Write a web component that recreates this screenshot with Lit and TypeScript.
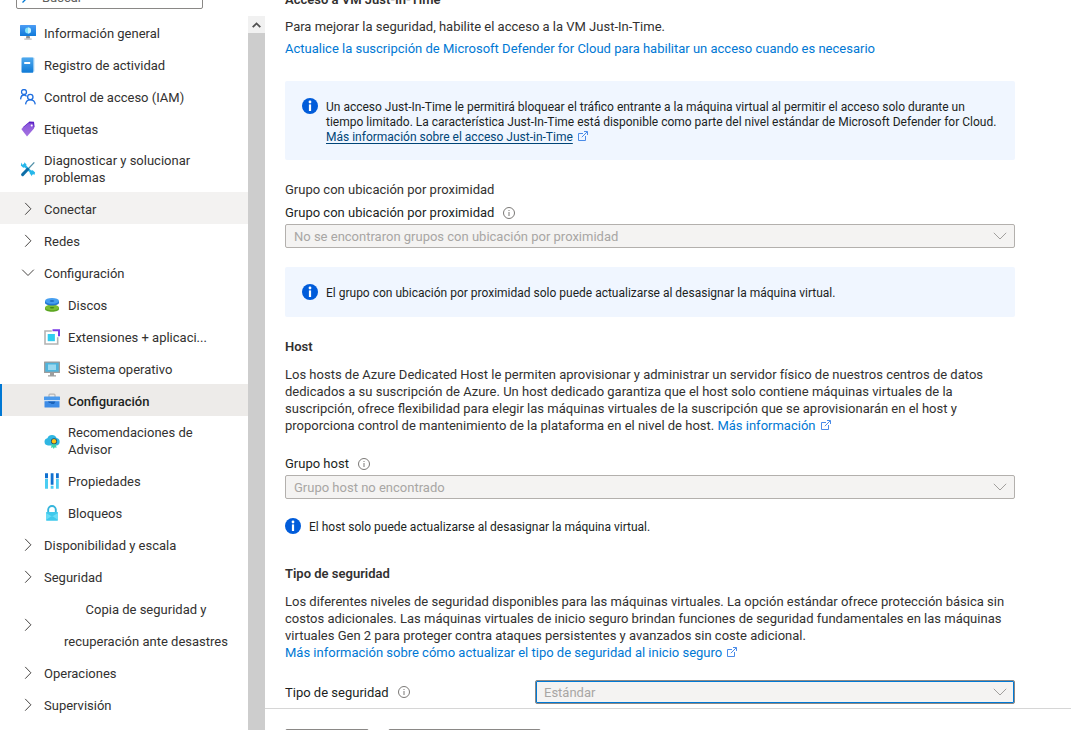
import { LitElement, html, css, svg, nothing } from "lit";
import type { TemplateResult } from "lit";
import { customElement } from "lit/decorators.js";
import { classMap } from "lit/directives/class-map.js";

const icon = (body: unknown) =>
  html`<svg class="icon" viewBox="0 0 16 16" aria-hidden="true">${body}</svg>`;

const icons: Record<string, TemplateResult> = {
  overview: icon(svg`
    <defs>
      <linearGradient id="ov" x1="0" y1="1" x2="0" y2="0"><stop offset="0" stop-color="#0f7ad9"/><stop offset="1" stop-color="#4b9cf5"/></linearGradient>
    </defs>
    <rect x="0" y="0" width="16" height="11" rx=".5" fill="url(#ov)"/>
    <circle cx="8" cy="5.500" r="3" fill="#7fe3fb"/>
    <path d="M8 2.500a3 3 0 0 1 0 6Z" fill="#c5f4ff"/>
    <path d="M6.300 11h3.400l.4 2.500H6Z" fill="#8f8f8f"/>
    <path d="M4.300 13.500h7.400v1.200H4.300Z" fill="#b9b9b9"/>`),
  log: icon(svg`
    <defs>
      <linearGradient id="lg" x1="0" y1="1" x2="0" y2="0"><stop offset="0" stop-color="#0f7ad6"/><stop offset="1" stop-color="#4fa9ee"/></linearGradient>
    </defs>
    <path d="M3 .5h10.500a1 1 0 0 1 1 1v13H3Z" fill="#b9ddf7"/>
    <path d="M1.500 1.500a1 1 0 0 1 1-1h10a.8.8 0 0 1 .8.800V15a.8.8 0 0 1-.8.800h-10a1 1 0 0 1-1-1Z" fill="url(#lg)"/>
    <rect x="4.200" y="5" width="6" height="2" rx=".5" fill="#fff"/>`),
  iam: icon(svg`
    <g fill="none" stroke="#1f6fe0" stroke-width="1.300">
      <circle cx="4" cy="3" r="2.500"/>
      <path d="M.6 10.400C.8 7.500 2.200 6 4 6c1.200 0 2 .5 2.600 1.300"/>
      <circle cx="10.300" cy="8" r="2.700"/>
      <path d="M5.600 15.400c.2-2.900 2.100-4.600 4.700-4.600 2.700 0 4.700 1.800 4.900 4.600"/>
    </g>`),
  tags: icon(svg`
    <defs>
      <linearGradient id="tg" x1="0" y1="0" x2="0" y2="1"><stop offset="0" stop-color="#8a56dc"/><stop offset="1" stop-color="#a573e0"/></linearGradient>
    </defs>
    <path d="M9.500.5 14 .8l.6 5.200-3 3L2.500 6.500Z" fill="#5b1fc4"/>
    <path d="M1.300 8 8.500 2.300 13 2.500l1 5L7 15.400Z" fill="url(#tg)"/>
    <circle cx="11.700" cy="4.500" r="1" fill="#fff"/>`),
  diagnose: icon(svg`
    <path d="M3.300 3.300 12.800 12.900" stroke="#26b7ea" stroke-width="2.300"/>
    <path d="M1.600 1.500.8 4.500l2.400 2.200 2.700-.6.6-2.500L4.300 1.300 4 3.700l-1.400.400ZM9.700 12.300l.5-2.500 2.600-.6 2.300 2.300-.7 2.600-.9-.9-1.500.5.100 1.700Z" fill="#26b7ea"/>
    <path d="M14.300 1.400 7.600 8.500" stroke="#4f8fa8" stroke-width="1.300"/>
    <path d="M7.700 8.300 2.600 13.600" stroke="#0d6ea8" stroke-width="3" stroke-linecap="round"/>`),
  disks: icon(svg`
    <path d="M1 10.300v1.700C1 13.700 4 14.700 8 14.700s7-1 7-2.700v-1.700Z" fill="#5aa51f"/>
    <ellipse cx="8" cy="10.400" rx="7" ry="2.800" fill="#7cbd34"/>
    <ellipse cx="8" cy="10.800" rx="2.300" ry=".7" fill="#3f8613"/>
    <path d="M1 4v1.700c0 1.700 3 2.700 7 2.700s7-1 7-2.700V4Z" fill="#2276d2"/>
    <ellipse cx="8" cy="3.900" rx="7" ry="2.900" fill="#479ff0"/>
    <ellipse cx="8" cy="4" rx="2.300" ry=".8" fill="#1461b8"/>`),
  extensions: icon(svg`
    <path d="M7.800 2H1v13h12.700V8.300" fill="#fff" stroke="#b3b3b3" stroke-width="1.600"/>
    <rect x="3.700" y="5" width="7.200" height="7.200" fill="#32cdf0"/>
    <path d="M8.500 1.200H15v6" fill="none" stroke="#7a3be8" stroke-width="2"/>`),
  os: icon(svg`
    <rect x="0" y=".5" width="16" height="11.500" rx=".5" fill="#9d9d9d"/>
    <rect x="1.300" y="1.800" width="13.400" height="8.900" fill="#4fb4dc"/>
    <rect x="4" y="3.500" width="8" height="5.500" fill="#9bd9f0"/>
    <path d="M6 12h4v2.200h2V15.500H4v-1.300h2Z" fill="#9d9d9d"/>`),
  toolbox: icon(svg`
    <path d="M5 4V2.100c0-.5.4-.9.9-.9h4.200c.5 0 .9.400.9.900V4" fill="none" stroke="#b5b5b5" stroke-width="1.200"/>
    <rect x="0" y="3.500" width="16" height="4" rx=".5" fill="#4b9aec"/>
    <rect x=".5" y="8" width="15" height="6.500" rx=".5" fill="#3c8be6"/>
    <path d="M0 7.200h16v1H0Z" fill="#d3e7fb"/>
    <path d="M4 8.500h7.500L10 11H7.500l-1-1H5Z" fill="#1a62b8"/>`),
  advisor: icon(svg`
    <path d="M4 12.500a3.700 3.700 0 0 1-.6-7.300A5 5 0 0 1 12.600 5a3.800 3.800 0 0 1-.4 7.500Z" fill="#2fb6e2"/>
    <path d="m8 10-1 5 1.700-.8L9.800 16l1-1.800 1.700.8L11.800 10Z" fill="#3fd3b0"/>
    <circle cx="10" cy="8.300" r="3" fill="#254d64"/>
    <circle cx="10" cy="8.300" r="2.200" fill="#ffc414"/>`),
  properties: icon(svg`
    <g fill="#0f70d0"><path d="M1 .3h3v5H1ZM6.700.3h2.800v11.500H6.700ZM12 .3h2.800v5H12Z"/></g>
    <g fill="#4bcdf2"><path d="M1 6h3v9.800H1ZM6.700 12.800h2.800v3H6.700ZM12 6h2.800v9.800H12Z"/></g>`),
  lock: icon(svg`
    <path d="M4.200 8V4.800a3.800 3.800 0 0 1 7.600 0V8" fill="none" stroke="#35b5dc" stroke-width="1.900"/>
    <rect x="2" y="7" width="12" height="8.800" rx=".8" fill="#3fc9ec"/>
    <path d="m2 15 6-4.200 6 4.200V8L8 11.500 2 8Z" fill="#6adcf6"/>`),
};

const chevron = (open: boolean) => html`<svg class="icon" viewBox="0 0 16 16" aria-hidden="true">
  <path d=${open ? "M2.200 4.700 8 10.500l5.800-5.800" : "M5.200 1.900 10.900 7.800 5.200 13.700"} fill="none" stroke="#484644" stroke-width="1"/>
</svg>`;

const infoBadge = html`<svg class="badge" viewBox="0 0 16 16" aria-hidden="true">
  <circle cx="8" cy="8" r="8" fill="#015cda"/>
  <circle cx="8" cy="4" r="1.400" fill="#fff"/>
  <path d="M6.900 6.400h2.200v6.600H6.900Z" fill="#fff"/>
</svg>`;

const hint = html`<svg class="hint" viewBox="0 0 12 12" aria-hidden="true">
  <circle cx="6" cy="6" r="5.500" fill="none" stroke="#7a7876"/>
  <path d="M5.500 3h1v1h-1ZM5.500 5h1v4h-1Z" fill="#7a7876"/>
</svg>`;

const external = html`<svg class="external" viewBox="0 0 10 10" aria-hidden="true">
  <path d="M5 2.500H.5v7h7V5M3.800 6.200 9.300.7M6 .5h3.500V4" fill="none" stroke="#4a8be8" stroke-width="1"/>
</svg>`;

interface NavItem {
  label: string;
  icon?: string;
  sub?: boolean;
  open?: boolean;
  hover?: boolean;
  active?: boolean;
  centered?: boolean;
}

const navItems: NavItem[] = [
  { label: "Información general", icon: "overview" },
  { label: "Registro de actividad", icon: "log" },
  { label: "Control de acceso (IAM)", icon: "iam" },
  { label: "Etiquetas", icon: "tags" },
  { label: "Diagnosticar y solucionar problemas", icon: "diagnose" },
  { label: "Conectar", hover: true },
  { label: "Redes" },
  { label: "Configuración", open: true },
  { label: "Discos", icon: "disks", sub: true },
  { label: "Extensiones + aplicaci...", icon: "extensions", sub: true },
  { label: "Sistema operativo", icon: "os", sub: true },
  { label: "Configuración", icon: "toolbox", sub: true, active: true },
  { label: "Recomendaciones de Advisor", icon: "advisor", sub: true },
  { label: "Propiedades", icon: "properties", sub: true },
  { label: "Bloqueos", icon: "lock", sub: true },
  { label: "Disponibilidad y escala" },
  { label: "Seguridad" },
  { label: "Copia de seguridad y recuperación ante desastres", centered: true },
  { label: "Operaciones" },
  { label: "Supervisión" },
];

@customElement("side-menu")
export class SideMenu extends LitElement {
  static styles = css`
    :host {
      display: flex;
      flex-direction: column;
      width: 265px;
      flex: none;
      min-height: 0;
      overflow: hidden;
      color: #323130;
    }
    .top {
      display: flex;
      align-items: flex-end;
      height: 9px;
      padding: 0 10px 7px 16px;
      overflow: hidden;
      flex: none;
    }
    .search {
      display: flex;
      align-items: center;
      gap: 8px;
      box-sizing: border-box;
      width: 187px;
      height: 24px;
      padding: 0 5px;
      border: 1px solid #8a8886;
      border-radius: 2px;
    }
    .search input {
      flex: 1;
      min-width: 0;
      padding: 0;
      border: 0;
      outline: 0;
      background: none;
      font: inherit;
    }
    .search input::placeholder {
      color: #605e5c;
      opacity: 1;
    }
    .glass {
      width: 12px;
      height: 12px;
    }
    .tools {
      display: flex;
      flex: 1;
      justify-content: flex-end;
      gap: 20px;
      padding: 0 0 6px;
    }
    .tools button {
      padding: 0;
      border: 0;
      background: none;
      font: inherit;
      line-height: 16px;
      color: #605e5c;
    }
    .body {
      display: flex;
      flex: 1;
      min-height: 0;
    }
    .list {
      flex: 1;
      min-width: 0;
      overflow: hidden;
    }
    .item {
      display: flex;
      align-items: center;
      gap: 8px;
      box-sizing: border-box;
      min-height: 32px;
      padding: 1px 16px 0 20px;
      color: inherit;
      text-decoration: none;
      line-height: 17px;
    }
    .label {
      flex: 1;
      padding-top: 1px;
    }
    .icon {
      width: 16px;
      height: 16px;
      flex: none;
    }
    .sub {
      padding-left: 44px;
    }
    .tall {
      min-height: 48px;
    }
    .hover {
      background: #f3f2f1;
    }
    .active {
      background: #edebe9;
      box-shadow: inset 2px 0 #0078d4;
      font-weight: 500;
      color: #201f1e;
    }
    .centered {
      height: 64px;
      padding-right: 0;
      text-align: center;
      line-height: 32px;
    }
    .centered .label {
      padding: 2px 16px 0;
    }
    .scroll {
      width: 17px;
      flex: none;
      background: #cdcdcd;
    }
    .up {
      display: flex;
      align-items: center;
      justify-content: center;
      width: 17px;
      height: 17px;
      padding: 0;
      border: 0;
      background: #f1f1f1;
    }
    .arrow {
      width: 9px;
      height: 6px;
    }
  `;

  render() {
    return html`
      <div class="top">
        <label class="search">
          <svg class="glass" viewBox="0 0 12 12" aria-hidden="true">
            <path d="M.5 11.500 4.500 7.500" stroke="#0078d4" stroke-width="1.300"/>
            <circle cx="7.500" cy="4.500" r="3.800" fill="none" stroke="#0078d4"/>
          </svg>
          <input type="search" placeholder="Buscar" aria-label="Buscar" />
        </label>
        <div class="tools">
          <button type="button" aria-label="Ordenar">⬨</button>
          <button type="button" aria-label="Contraer menú">«</button>
        </div>
      </div>
      <div class="body">
        <nav class="list">
          ${navItems.map(
            (item) => html`<a
              href="#"
              class=${classMap({
                item: true,
                sub: !!item.sub,
                hover: !!item.hover,
                active: !!item.active,
                centered: !!item.centered,
                tall: item.icon === "diagnose" || item.icon === "advisor",
              })}
              aria-current=${item.active ? "page" : nothing}
              >${item.icon ? icons[item.icon] : chevron(!!item.open)}<span class="label">${item.label}</span></a
            >`
          )}
        </nav>
        <div class="scroll">
          <button class="up" type="button" aria-label="Subir">
            <svg class="arrow" viewBox="0 0 9 6" aria-hidden="true">
              <path d="M.7 5.200 4.500 1.400l3.800 3.800" fill="none" stroke="#505050" stroke-width="1.800"/>
            </svg>
          </button>
        </div>
      </div>
    `;
  }
}

@customElement("settings-page")
export class SettingsPage extends LitElement {
  static styles = css`
    :host {
      display: flex;
      flex-direction: column;
      flex: 1;
      min-width: 0;
      overflow: hidden;
      color: #323130;
    }
    .content {
      flex: 1;
      min-height: 0;
      overflow: hidden;
      padding: 0 56px 0 20px;
      line-height: 17px;
    }
    h2,
    h3,
    p {
      margin: 0;
      font-size: 13px;
    }
    h2 {
      font-weight: 600;
    }
    h3 {
      font-weight: 400;
    }
    a {
      color: #0078d4;
      text-decoration: none;
    }
    .clipped {
      margin-top: -9px;
    }
    .lead {
      margin: 10px 0 5px;
    }
    .note {
      display: flex;
      gap: 8px;
      padding: 17px 16px 16px 17px;
      border-radius: 2px;
      background: #f0f6ff;
      font-size: 12px;
      line-height: 15px;
      color: #201f1e;
    }
    .note p {
      padding-top: 2px;
      font-size: 12px;
    }
    .note a {
      color: #004578;
      text-decoration: underline;
      text-underline-offset: 2px;
    }
    .first {
      margin: 24px 0 21px;
      padding-bottom: 15px;
    }
    .second {
      margin: 19px 0 21px;
    }
    .plain {
      padding: 0;
      margin: 19px 0 30px;
      background: none;
    }
    .badge {
      width: 16px;
      height: 16px;
      flex: none;
    }
    .hint {
      width: 12px;
      height: 12px;
      flex: none;
    }
    .external {
      width: 10px;
      height: 10px;
      margin-left: 5px;
    }
    .caption {
      display: flex;
      align-items: center;
      gap: 9px;
      margin: 6px 0 3px;
      color: #201f1e;
    }
    .text {
      margin: 11px 0 0;
    }
    .text + .caption {
      margin-top: 21px;
    }
    .picker {
      display: grid;
      align-items: center;
    }
    .picker select,
    .arrow {
      grid-area: 1 / 1;
    }
    select {
      appearance: none;
      box-sizing: border-box;
      width: 100%;
      height: 24px;
      padding: 1px 32px 0 8px;
      border: 1px solid #b3b0ad;
      border-radius: 2px;
      background: #f4f3f2;
      color: #a8a6a4;
      opacity: 1;
      font: inherit;
    }
    .arrow {
      justify-self: end;
      width: 14px;
      height: 8px;
      margin-right: 8px;
      pointer-events: none;
    }
    .row {
      display: grid;
      grid-template-columns: 250px 1fr;
      align-items: center;
      margin-top: 19px;
    }
    .row .caption {
      margin: 0;
    }
    .row select {
      border-color: #8a8886;
      box-shadow: inset 0 0 0 1px #0078d4;
    }
    .footer {
      display: flex;
      gap: 19px;
      height: 1px;
      padding: 20px 20px 0;
      border-top: 1px solid #d6d6d6;
      overflow: hidden;
    }
    .footer button {
      box-sizing: border-box;
      height: 24px;
      flex: none;
      border: 1px solid #8a8886;
      border-radius: 2px;
      background: #fff;
    }
    .apply {
      width: 84px;
    }
    .discard {
      width: 153px;
    }
  `;

  private picker(id: string, value: string) {
    return html`<div class="picker">
      <select id=${id} disabled>
        <option>${value}</option>
      </select>
      <svg class="arrow" viewBox="0 0 14 8" aria-hidden="true">
        <path d="M.8.8 7 7 13.200.8" fill="none" stroke="#a19f9d" stroke-width="1"/>
      </svg>
    </div>`;
  }

  render() {
    return html`
      <div class="content">
        <h2 class="clipped">Acceso a VM Just-In-Time</h2>
        <p class="lead">Para mejorar la seguridad, habilite el acceso a la VM Just-In-Time.</p>
        <a href="#">Actualice la suscripción de Microsoft Defender for Cloud para habilitar un acceso cuando es necesario</a>

        <div class="note first">
          ${infoBadge}
          <p>
            Un acceso Just-In-Time le permitirá bloquear el tráfico entrante a la máquina virtual al permitir el acceso
            solo durante un tiempo limitado. La característica Just-In-Time está disponible como parte del nivel
            estándar de Microsoft Defender for Cloud.<br /><a href="#">Más información sobre el acceso Just-in-Time</a
            >${external}
          </p>
        </div>

        <h3>Grupo con ubicación por proximidad</h3>
        <label class="caption" for="proximity">Grupo con ubicación por proximidad ${hint}</label>
        ${this.picker("proximity", "No se encontraron grupos con ubicación por proximidad")}

        <div class="note second">
          ${infoBadge}
          <p>El grupo con ubicación por proximidad solo puede actualizarse al desasignar la máquina virtual.</p>
        </div>

        <h2>Host</h2>
        <p class="text">
          Los hosts de Azure Dedicated Host le permiten aprovisionar y administrar un servidor físico de nuestros
          centros de datos dedicados a su suscripción de Azure. Un host dedicado garantiza que el host solo contiene
          máquinas virtuales de la suscripción, ofrece flexibilidad para elegir las máquinas virtuales de la
          suscripción que se aprovisionarán en el host y proporciona control de mantenimiento de la plataforma en el
          nivel de host. <a href="#">Más información${external}</a>
        </p>
        <label class="caption" for="host">Grupo host ${hint}</label>
        ${this.picker("host", "Grupo host no encontrado")}

        <div class="note plain">
          ${infoBadge}
          <p>El host solo puede actualizarse al desasignar la máquina virtual.</p>
        </div>

        <h2>Tipo de seguridad</h2>
        <p class="text">
          Los diferentes niveles de seguridad disponibles para las máquinas virtuales. La opción estándar ofrece
          protección básica sin costos adicionales. Las máquinas virtuales de inicio seguro brindan funciones de
          seguridad fundamentales en las máquinas virtuales Gen 2 para proteger contra ataques persistentes y avanzados
          sin coste adicional.<br /><a href="#"
            >Más información sobre cómo actualizar el tipo de seguridad al inicio seguro${external}</a
          >
        </p>
        <div class="row">
          <label class="caption" for="security">Tipo de seguridad ${hint}</label>
          ${this.picker("security", "Estándar")}
        </div>
      </div>
      <footer class="footer">
        <button class="apply" type="button" aria-label="Aplicar"></button>
        <button class="discard" type="button" aria-label="Descartar cambios"></button>
      </footer>
    `;
  }
}

@customElement("app-root")
export class AppRoot extends LitElement {
  static styles = css`
    :host {
      display: flex;
      height: 100vh;
      overflow: hidden;
      background: #fff;
      font: 13px/17px Roboto, "Open Sans", sans-serif;
    }
  `;

  render() {
    return html`<side-menu></side-menu><settings-page></settings-page>`;
  }
}
